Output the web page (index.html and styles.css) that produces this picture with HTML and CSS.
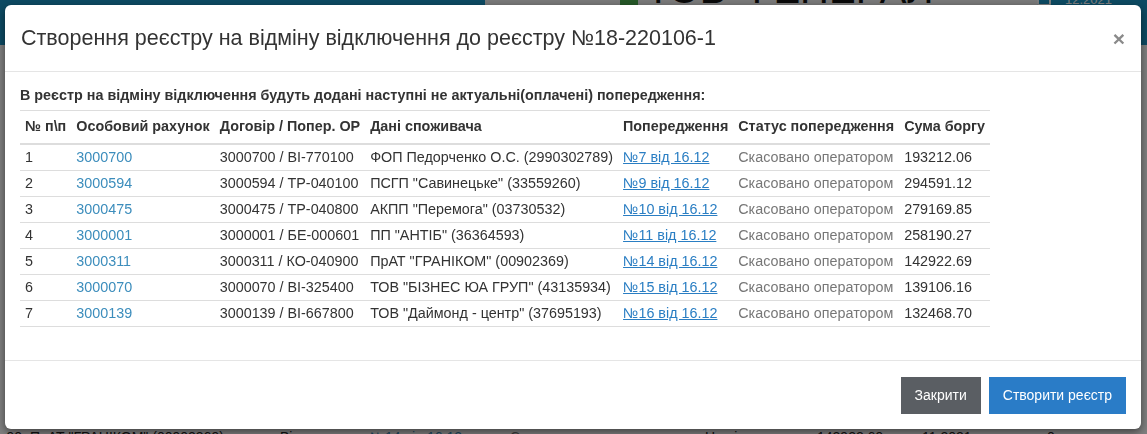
FILE: index.html
```html
<!DOCTYPE html>
<html lang="uk">
<head>
<meta charset="utf-8">
<title>Створення реєстру</title>
<link rel="stylesheet" href="styles.css">
</head>
<body>
<div class="page">
  <header class="topbar">
    <div class="brand"><span class="brand-icon"></span><span class="brand-text">ТОВ "ГЕНЕРАЛ</span></div>
    <div class="topdate"><span class="cal"></span>12.2021</div>
  </header>
  <main class="bg-main">
    <div class="bg-row">
      <span class="c1">90</span>
      <span class="c2">ПрАТ "ГРАНІКОМ" (00902369)</span>
      <span class="c3">Від</span>
      <span class="c4">№14 від 16.12</span>
      <span class="c5">Скасовано оператором</span>
      <span class="c6">Не відправлено</span>
      <span class="c7">142922.69</span>
      <span class="c8">11.2021</span>
      <span class="c9">0</span>
    </div>
  </main>
</div>

<div class="backdrop"></div>

<div class="modal">
  <div class="modal-dialog">
    <div class="modal-header">
      <h4 class="modal-title">Створення реєстру на відміну відключення до реєстру №18-220106-1</h4>
      <button class="close" type="button">×</button>
    </div>
    <div class="modal-body">
      <p class="intro">В реєстр на відміну відключення будуть додані наступні не актуальні(оплачені) попередження:</p>
      <table class="grid">
        <thead>
          <tr>
            <th>№ п\п</th>
            <th>Особовий рахунок</th>
            <th>Договір / Попер. ОР</th>
            <th>Дані споживача</th>
            <th>Попередження</th>
            <th>Статус попередження</th>
            <th>Сума боргу</th>
          </tr>
        </thead>
        <tbody>
          <tr><td>1</td><td><a class="acc">3000700</a></td><td>3000700 / ВІ-770100</td><td>ФОП Педорченко О.С. (2990302789)</td><td><a class="warn">№7 від 16.12</a></td><td class="status">Скасовано оператором</td><td>193212.06</td></tr>
          <tr><td>2</td><td><a class="acc">3000594</a></td><td>3000594 / ТР-040100</td><td>ПСГП "Савинецьке" (33559260)</td><td><a class="warn">№9 від 16.12</a></td><td class="status">Скасовано оператором</td><td>294591.12</td></tr>
          <tr><td>3</td><td><a class="acc">3000475</a></td><td>3000475 / ТР-040800</td><td>АКПП "Перемога" (03730532)</td><td><a class="warn">№10 від 16.12</a></td><td class="status">Скасовано оператором</td><td>279169.85</td></tr>
          <tr><td>4</td><td><a class="acc">3000001</a></td><td>3000001 / БЕ-000601</td><td>ПП "АНТІБ" (36364593)</td><td><a class="warn">№11 від 16.12</a></td><td class="status">Скасовано оператором</td><td>258190.27</td></tr>
          <tr><td>5</td><td><a class="acc">3000311</a></td><td>3000311 / КО-040900</td><td>ПрАТ "ГРАНІКОМ" (00902369)</td><td><a class="warn">№14 від 16.12</a></td><td class="status">Скасовано оператором</td><td>142922.69</td></tr>
          <tr><td>6</td><td><a class="acc">3000070</a></td><td>3000070 / ВІ-325400</td><td>ТОВ "БІЗНЕС ЮА ГРУП" (43135934)</td><td><a class="warn">№15 від 16.12</a></td><td class="status">Скасовано оператором</td><td>139106.16</td></tr>
          <tr><td>7</td><td><a class="acc">3000139</a></td><td>3000139 / ВІ-667800</td><td>ТОВ "Даймонд - центр" (37695193)</td><td><a class="warn">№16 від 16.12</a></td><td class="status">Скасовано оператором</td><td>132468.70</td></tr>
        </tbody>
      </table>
    </div>
    <div class="modal-footer">
      <button class="btn btn-secondary" type="button">Закрити</button>
      <button class="btn btn-primary" type="button">Створити реєстр</button>
    </div>
  </div>
</div>
</body>
</html>
```

FILE: styles.css
```css
* { box-sizing: border-box; }

html, body {
  margin: 0;
  padding: 0;
  height: 100%;
  overflow: hidden;
}

body {
  font-family: "Liberation Sans", Arial, sans-serif;
  font-size: 14.35px;
  color: #333;
  background: #fff;
}

/* background page */
.topbar {
  height: 45px;
  background: #1a95c6;
  display: flex;
  padding-left: 485px;
}

.brand {
  width: 598px;
  height: 45px;
  background: #f4f4f4;
  display: flex;
  align-items: flex-start;
  padding-left: 135px;
  overflow: hidden;
}

.brand-icon {
  width: 18px;
  height: 30px;
  background: #4caf50;
  margin-top: -24px;
  margin-right: 8px;
}

.brand-text {
  font-size: 40px;
  line-height: 40px;
  margin-top: -31px;
  color: #111;
  white-space: nowrap;
}

.topdate {
  margin-left: auto;
  margin-right: 35px;
  color: #fff;
  font-size: 13px;
  margin-top: -8px;
  display: flex;
  gap: 14px;
}

.cal {
  width: 14px;
  height: 14px;
  border: 2px solid #fff;
  border-radius: 2px;
}

.bg-main {
  padding-top: 384px;
}

.bg-row {
  display: flex;
  white-space: nowrap;
  font-size: 14px;
  line-height: 16px;
  color: #222;
}

.bg-row .c1 { width: 30px; text-align: right; padding-right: 8px; }
.bg-row .c2 { width: 250px; }
.bg-row .c3 { width: 90px; }
.bg-row .c4 { width: 140px; color: #3c8dbc; text-decoration: underline; }
.bg-row .c5 { width: 195px; color: #777; }
.bg-row .c6 { width: 112px; }
.bg-row .c7 { width: 105px; }
.bg-row .c8 { width: 125px; }
.bg-row .c9 { width: 40px; }

.backdrop {
  position: fixed;
  inset: 0;
  background: rgba(0, 0, 0, 0.5);
}

/* modal */
.modal {
  position: fixed;
  inset: 0;
  padding: 5px 6px 0 5px;
}

.modal-dialog {
  background: #fff;
  border-radius: 6px;
  box-shadow: 0 3px 9px rgba(0, 0, 0, 0.5);
}

.modal-header {
  display: flex;
  align-items: center;
  justify-content: space-between;
  padding: 19px 16px 19px 16px;
  border-bottom: 1px solid #e5e5e5;
}

.modal-title {
  margin: 0;
  font-size: 21.5px;
  line-height: 28px;
  font-weight: normal;
  color: #333;
}

.close {
  border: 0;
  background: transparent;
  padding: 0;
  font-family: "Liberation Sans", Arial, sans-serif;
  font-size: 21px;
  font-weight: bold;
  line-height: 1;
  color: #8a8a8a;
  cursor: pointer;
}

.modal-body {
  padding: 15px;
}

.intro {
  margin: 0 0 6px 0;
  font-weight: bold;
  line-height: 17px;
  color: #333;
}

.grid {
  border-collapse: collapse;
  margin-bottom: 18px;
}

.grid th,
.grid td {
  text-align: left;
  white-space: nowrap;
  line-height: 17px;
}

.grid th {
  padding: 7px 5px 8px 5px;
  font-weight: bold;
  border-top: 1px solid #ddd;
  border-bottom: 2px solid #ddd;
}

.grid td {
  padding: 4px 5px;
  border-bottom: 1px solid #ddd;
}

.acc {
  color: #3c8dbc;
  text-decoration: none;
}

.warn {
  color: #2a7ec3;
  text-decoration: underline;
}

.status {
  color: #777;
}

.modal-footer {
  display: flex;
  justify-content: flex-end;
  gap: 8px;
  padding: 16px 15px 15px 15px;
  border-top: 1px solid #e5e5e5;
}

.btn {
  font-family: "Liberation Sans", Arial, sans-serif;
  font-size: 14px;
  line-height: 19px;
  padding: 9px 14px;
  border: 0;
  border-radius: 0;
  color: #fff;
  cursor: pointer;
}

.btn-secondary {
  background: #5a5e63;
}

.btn-primary {
  background: #2a7cc7;
}
```
